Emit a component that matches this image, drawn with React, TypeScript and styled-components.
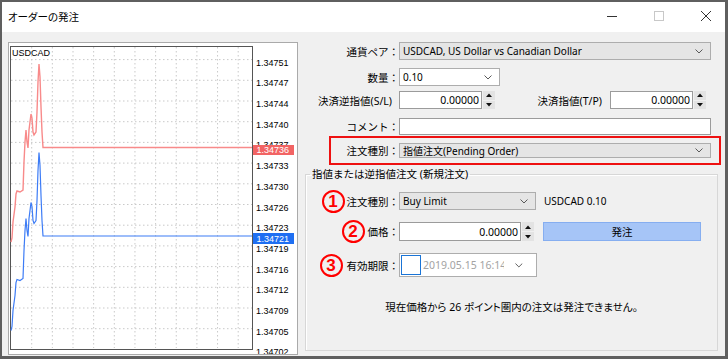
import React from "react";
import styled, { createGlobalStyle } from "styled-components";

const GlobalStyle = createGlobalStyle`
  html, body {
    margin: 0;
    padding: 0;
    background: #5f5f5f;
  }
  body {
    font-family: "Noto Sans", "Noto Sans CJK JP", sans-serif;
    font-size: 10px;
    color: #000;
  }
`;

// chart data (svg coords inside the chart frame)
const PRICES = [
  "1.34751", "1.34747", "1.34744", "1.34740", "1.34737", "1.34733", "1.34730",
  "1.34726", "1.34723", "1.34719", "1.34716", "1.34712", "1.34709", "1.34705", "1.34702",
];
const GRID_Y = PRICES.map((_, k) => 16.6 + 20.7 * k);
const GRID_X = Array.from({ length: 11 }, (_, k) => 22.7 + 20.65 * k);

const ASK: [number, number][] = [
  [2, 199], [3, 195], [4, 179], [6, 164], [7, 151], [8, 148], [11, 149], [14, 147],
  [15, 119], [16, 99], [17, 87], [18, 99], [19, 105], [20, 87], [22, 71], [23, 75],
  [24, 89], [25, 92], [27, 89], [28, 69], [29, 39], [30, 21], [31, 34], [32, 64],
  [33, 89], [34, 104.5], [243, 104.5],
];
const BID: [number, number][] = ASK.map(([x, y]) => [x, y + 88.5]);

const toPoints = (pts: [number, number][]) => pts.map(([x, y]) => `${x},${y}`).join(" ");

export default function App() {
  return (
    <>
      <GlobalStyle />
      <Window>
        <TitleBar>
          <Title>オーダーの発注</Title>
          <Controls>
            <svg width="10" height="10" viewBox="0 0 10 10">
              <line x1="0" y1="5.5" x2="10" y2="5.5" stroke="#333" strokeWidth="1" />
            </svg>
            <svg width="10" height="10" viewBox="0 0 10 10">
              <rect x="0.5" y="0.5" width="9" height="9" fill="none" stroke="#c8c8c8" strokeWidth="1" />
            </svg>
            <svg width="10" height="10" viewBox="0 0 10 10">
              <line x1="0" y1="0" x2="10" y2="10" stroke="#333" strokeWidth="1" />
              <line x1="10" y1="0" x2="0" y2="10" stroke="#333" strokeWidth="1" />
            </svg>
          </Controls>
        </TitleBar>

        <Body>
          <ChartFrame>
            <PriceChart />
          </ChartFrame>

          <FormPanel>
            <Row $top={0} $h={18}>
              <Label $w={101}>通貨ペア：</Label>
              <Select $w={312}>
                <SelectText>USDCAD, US Dollar vs Canadian Dollar</SelectText>
                <Chevron />
              </Select>
            </Row>

            <Row $top={8} $h={18}>
              <Label $w={101}>数量：</Label>
              <Select $w={101} $white>
                <SelectText>0.10</SelectText>
                <Chevron />
              </Select>
            </Row>

            <Row $top={5} $h={18}>
              <Label $w={94} $gap={7}>決済逆指値(S/L)</Label>
              <SpinBox value="0.00000" width={96} />
              <Label $w={107} $gap={8}>決済指値(T/P)</Label>
              <SpinBox value="0.00000" width={96} />
            </Row>

            <Row $top={9} $h={17}>
              <Label $w={101}>コメント：</Label>
              <TextField $w={312} />
            </Row>

            <Highlight>
              <Label $w={68}>注文種別：</Label>
              <Select $w={312} $h={15}>
                <SelectText>指値注文(Pending Order)</SelectText>
                <Chevron />
              </Select>
            </Highlight>

            <Group>
              <Legend>指値または逆指値注文 (新規注文)</Legend>

              <Row $top={11} $h={18}>
                <Label $w={93}>
                  <Mark $gap={2}>1</Mark>注文種別：
                </Label>
                <Select $w={137}>
                  <SelectText>Buy Limit</SelectText>
                  <Chevron />
                </Select>
                <Info>USDCAD 0.10</Info>
              </Row>

              <Row $top={12} $h={19}>
                <Label $w={93}>
                  <Mark $gap={3}>2</Mark>価格：
                </Label>
                <SpinBox value="0.00000" width={135} />
                <SendButton>発注</SendButton>
              </Row>

              <Row $top={12} $h={24}>
                <Label $w={93}>
                  <Mark $gap={4}>3</Mark>有効期限：
                </Label>
                <DatePicker>
                  <DateCheck />
                  <DateText>2019.05.15 16:14</DateText>
                  <Chevron />
                </DatePicker>
              </Row>

              <Note>現在価格から 26 ポイント圏内の注文は発注できません。</Note>
            </Group>
          </FormPanel>
        </Body>
      </Window>
    </>
  );
}

function PriceChart() {
  return (
    <svg width="288" height="311" viewBox="0 0 288 311" style={{ display: "block" }}>
      {GRID_Y.slice(0, 14).map((y, i) => (
        <line key={"h" + i} x1="2" y1={y} x2="243" y2={y} stroke="#c9c9c9" strokeDasharray="1.5 2.5" />
      ))}
      {GRID_X.map((x, i) => (
        <line key={"v" + i} x1={x} y1="4" x2={x} y2="305" stroke="#c9c9c9" strokeDasharray="1.5 2.5" />
      ))}
      <rect x="1.5" y="3.5" width="242" height="303" fill="none" stroke="#555" strokeWidth="1" />
      <text x="3" y="13" fontFamily="'Liberation Sans', Arial, sans-serif" fontSize="9" fill="#000">USDCAD</text>

      {PRICES.map((p, i) => (
        <text key={p} x="247" y={GRID_Y[i] + 6} fontFamily="'Liberation Sans', Arial, sans-serif" fontSize="9" fill="#000">
          {p}
        </text>
      ))}

      <polyline points={toPoints(ASK)} fill="none" stroke="#f88a8a" strokeWidth="1.4" />
      <polyline points={toPoints(BID)} fill="none" stroke="#3d7cf6" strokeWidth="1.2" />

      <rect x="244" y="102" width="41" height="10" fill="#f26464" />
      <text x="247.5" y="110" fontFamily="'Liberation Sans', Arial, sans-serif" fontSize="9" fill="#fff">1.34736</text>

      <rect x="244" y="190" width="41" height="11" fill="#1f6ff2" />
      <text x="247.5" y="198.5" fontFamily="'Liberation Sans', Arial, sans-serif" fontSize="9" fill="#fff">1.34721</text>
    </svg>
  );
}

function Chevron() {
  return (
    <svg width="8" height="5" viewBox="0 0 8 5">
      <polyline points="0.5,0.5 4,4 7.5,0.5" fill="none" stroke="#5a5a5a" strokeWidth="1" />
    </svg>
  );
}

function SpinBox(props: { value: string; width: number }) {
  return (
    <Spin style={{ width: props.width }}>
      <SpinInput>{props.value}</SpinInput>
      <SpinButtons>
        <SpinHalf>
          <svg width="6" height="4" viewBox="0 0 6 4"><polygon points="0,4 3,0.5 6,4" fill="#111" /></svg>
        </SpinHalf>
        <SpinHalf>
          <svg width="6" height="4" viewBox="0 0 6 4"><polygon points="0,0 3,3.5 6,0" fill="#111" /></svg>
        </SpinHalf>
      </SpinButtons>
    </Spin>
  );
}

const Window = styled.div`
  width: 728px;
  height: 359px;
  box-sizing: border-box;
  border: 2px solid #5f5f5f;
  border-right-width: 3px;
  border-bottom-width: 3px;
  background: #f0f0f0;
  display: flex;
  flex-direction: column;
  overflow: hidden;
`;

const TitleBar = styled.div`
  height: 28px;
  flex: none;
  background: #fff;
  display: flex;
  align-items: center;
  padding: 0 14px 2px 6px;
`;

const Title = styled.div`
  font-family: "Noto Sans CJK JP", sans-serif;
  font-size: 10.5px;
  font-feature-settings: "palt";
`;

const Controls = styled.div`
  margin-left: auto;
  display: flex;
  align-items: center;
  gap: 37px;

  svg {
    display: block;
  }
`;

const Body = styled.div`
  flex: 1;
  display: flex;
  align-items: flex-start;
  padding: 10px 0 0 6px;
`;

const ChartFrame = styled.div`
  width: 290px;
  height: 313px;
  box-sizing: border-box;
  flex: none;
  border: 1px solid #aaa;
  background: #fff;
`;

const FormPanel = styled.div`
  flex: 1;
  display: flex;
  flex-direction: column;
`;

const Row = styled.div<{ $top: number; $h: number }>`
  display: flex;
  align-items: center;
  margin-top: ${(p) => p.$top}px;
  height: ${(p) => p.$h}px;
`;

const Label = styled.div<{ $w: number; $gap?: number }>`
  width: ${(p) => p.$w}px;
  margin-right: ${(p) => p.$gap ?? 0}px;
  flex: none;
  display: flex;
  justify-content: flex-end;
  align-items: center;
  font-size: 10.5px;
  white-space: nowrap;
`;

const Select = styled.div<{ $w: number; $h?: number; $white?: boolean }>`
  width: ${(p) => p.$w}px;
  height: ${(p) => p.$h ?? 18}px;
  box-sizing: border-box;
  flex: none;
  display: flex;
  align-items: center;
  padding: 0 7px 0 3px;
  border: 1px solid #adadad;
  background: ${(p) => (p.$white ? "#fff" : "#e5e5e5")};

  svg {
    flex: none;
  }
`;

const SelectText = styled.span`
  flex: 1;
  white-space: nowrap;
  overflow: hidden;
`;

const TextField = styled.div<{ $w: number }>`
  width: ${(p) => p.$w}px;
  height: 100%;
  box-sizing: border-box;
  border: 1px solid #9b9b9b;
  background: #fff;
`;

const Spin = styled.div`
  height: 100%;
  flex: none;
  display: flex;
`;

const SpinInput = styled.div`
  flex: 1;
  box-sizing: border-box;
  border: 1px solid #9b9b9b;
  background: #fff;
  display: flex;
  align-items: center;
  justify-content: flex-end;
  padding-right: 2px;
  font-size: 10.5px;
`;

const SpinButtons = styled.div`
  width: 12px;
  flex: none;
  display: flex;
  flex-direction: column;
  gap: 1px;
  margin-left: 1px;
`;

const SpinHalf = styled.div`
  flex: 1;
  background: #e3e3e3;
  display: flex;
  align-items: center;
  justify-content: center;
`;

const Highlight = styled.div`
  margin: 1px 0 0 31px;
  width: 392px;
  height: 29px;
  box-sizing: border-box;
  border: 2px solid #ee1111;
  display: flex;
  align-items: center;
`;

const Group = styled.fieldset`
  margin: 2px 0 0 7px;
  padding: 0;
  min-width: 0;
  width: 413px;
  height: 184px;
  box-sizing: border-box;
  border: 1px solid #d7d7d7;
  box-shadow: inset 1px 1px 0 #fff;
`;

const Legend = styled.legend`
  margin-left: 4px;
  padding: 0 2px;
  line-height: 14px;
  font-size: 10.5px;
`;

const Mark = styled.span<{ $gap: number }>`
  width: 23px;
  height: 23px;
  box-sizing: border-box;
  border: 2.5px solid #ff0000;
  border-radius: 50%;
  margin-right: ${(p) => p.$gap}px;
  display: inline-flex;
  align-items: center;
  justify-content: center;
  color: #ff0000;
  font-family: "Liberation Sans", Arial, sans-serif;
  font-weight: bold;
  font-size: 17px;
  line-height: 1;
`;

const Info = styled.div`
  margin-left: 8px;
  font-size: 10px;
`;

const SendButton = styled.div`
  margin-left: 9px;
  width: 158px;
  height: 100%;
  box-sizing: border-box;
  border: 1px solid #86aef0;
  background: #a6c5f7;
  display: flex;
  align-items: center;
  justify-content: center;
  font-size: 10.5px;
`;

const DatePicker = styled.div`
  width: 138px;
  height: 100%;
  box-sizing: border-box;
  border: 1px solid #adadad;
  background: #fff;
  display: flex;
  align-items: center;
  padding: 0 13px 0 1px;
`;

const DateCheck = styled.div`
  width: 20px;
  height: 20px;
  box-sizing: border-box;
  flex: none;
  border: 1px solid #1a74d6;
  background: #fff;
`;

const DateText = styled.div`
  width: 84px;
  margin: 0 11px 0 2px;
  overflow: hidden;
  white-space: nowrap;
  color: #a3a3a3;
  font-size: 10.5px;
`;

const Note = styled.div`
  margin-top: 23px;
  line-height: 14px;
  text-align: center;
  font-size: 10.5px;
  font-feature-settings: "palt";
`;
